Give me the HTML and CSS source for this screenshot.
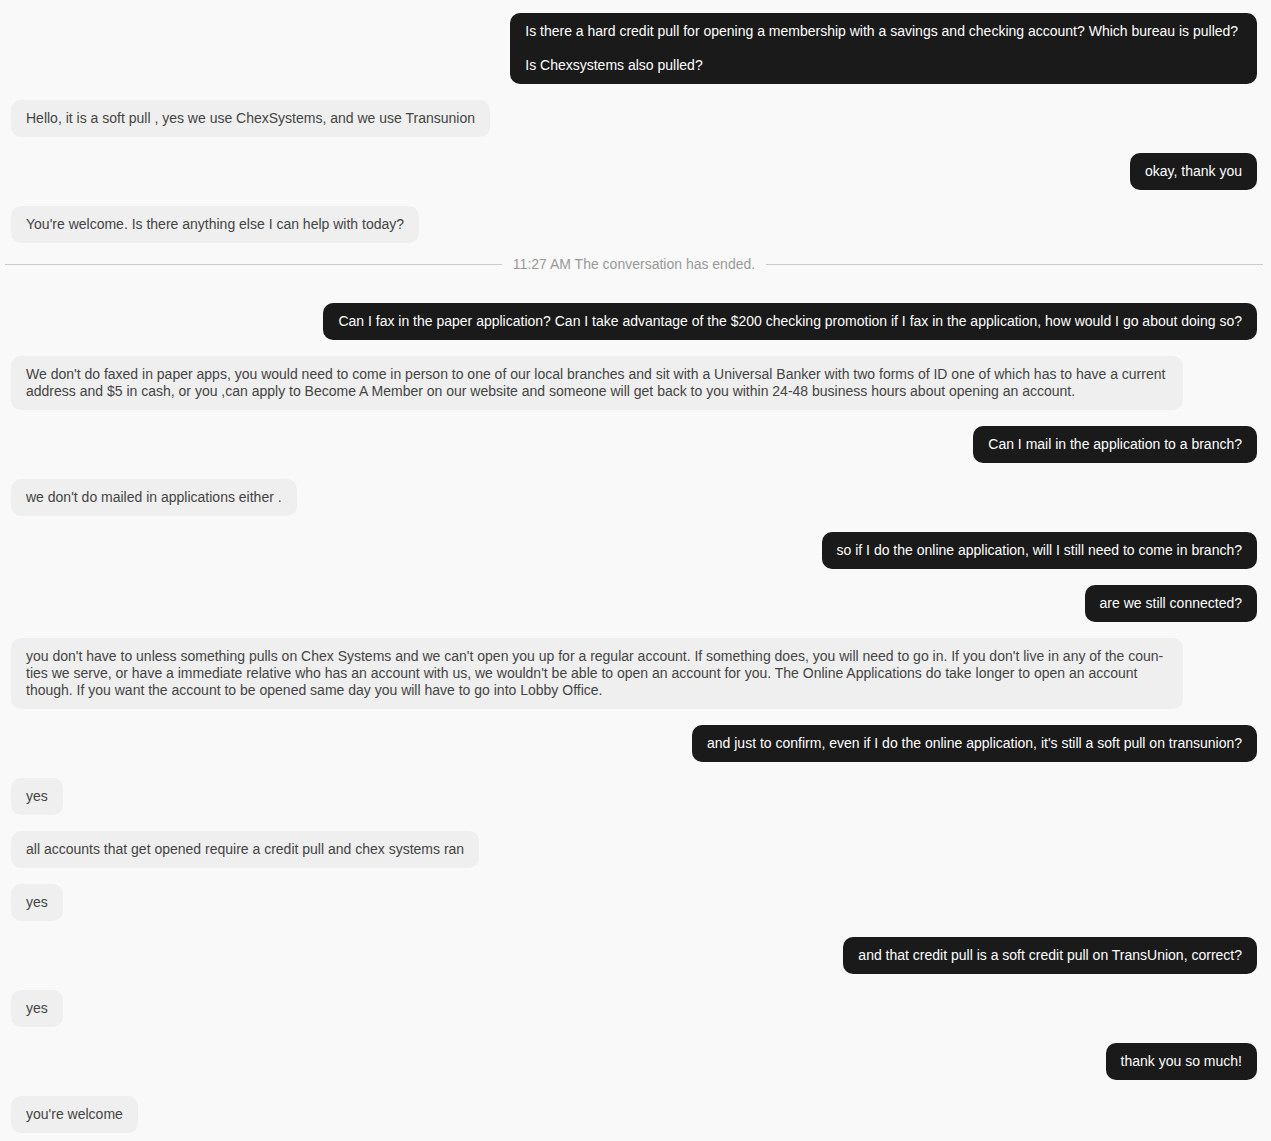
FILE: index.html
```html
<!DOCTYPE html>
<html>
<head>
<meta charset="utf-8">
<link rel="stylesheet" href="styles.css">
</head>
<body>
<div class="chat">
  <div class="msg user pre">Is there a hard credit pull for opening a membership with a savings and checking account? Which bureau is pulled? 

Is Chexsystems also pulled?</div>
  <div class="msg agent">Hello, it is a soft pull , yes we use ChexSystems, and we use Transunion</div>
  <div class="msg user">okay, thank you</div>
  <div class="msg agent">You're welcome. Is there anything else I can help with today?</div>
  <div class="sep"><span class="sep-text">11:27 AM The conversation has ended.</span></div>
  <div class="msg user">Can I fax in the paper application? Can I take advantage of the $200 checking promotion if I fax in the application, how would I go about doing so?</div>
  <div class="msg agent">We don't do faxed in paper apps, you would need to come in person to one of our local branches and sit with a Universal Banker with two forms of ID one of which has to have a current address and $5 in cash, or you ,can apply to Become A Member on our website and someone will get back to you within 24-48 business hours about opening an account.</div>
  <div class="msg user">Can I mail in the application to a branch?</div>
  <div class="msg agent">we don't do mailed in applications either .</div>
  <div class="msg user">so if I do the online application, will I still need to come in branch?</div>
  <div class="msg user">are we still connected?</div>
  <div class="msg agent">you don't have to unless something pulls on Chex Systems and we can't open you up for a regular account. If something does, you will need to go in. If you don't live in any of the coun&shy;ties we serve, or have a immediate relative who has an account with us, we wouldn't be able to open an account for you. The Online Applications do take longer to open an account though. If you want the account to be opened same day you will have to go into Lobby Office.</div>
  <div class="msg user">and just to confirm, even if I do the online application, it's still a soft pull on transunion?</div>
  <div class="msg agent">yes</div>
  <div class="msg agent">all accounts that get opened require a credit pull and chex systems ran</div>
  <div class="msg agent">yes</div>
  <div class="msg user">and that credit pull is a soft credit pull on TransUnion, correct?</div>
  <div class="msg agent">yes</div>
  <div class="msg user">thank you so much!</div>
  <div class="msg agent">you're welcome</div>
</div>
</body>
</html>
```
FILE: styles.css
```css
html, body {
  margin: 0;
  padding: 0;
  background: #f9f9f9;
}
body {
  font-family: "Liberation Sans", Arial, sans-serif;
  font-size: 14px;
  line-height: 17px;
}
.chat {
  display: flex;
  flex-direction: column;
  gap: 16px;
  padding: 13px 8px 8px 5px;
}
.msg {
  max-width: 1142px;
  padding: 10px 15px;
  border-radius: 10px;
  margin: 0 6px;
  overflow-wrap: break-word;
}
.pre {
  white-space: pre-wrap;
}
.user {
  align-self: flex-end;
  background: #1a1a1a;
  color: #ffffff;
}
.agent {
  align-self: flex-start;
  background: #efefef;
  color: #444444;
}
.sep {
  display: flex;
  align-items: center;
  gap: 11px;
  color: #999999;
  margin: -3px 0 14px 0;
}
.sep::before, .sep::after {
  content: "";
  flex: 1;
  height: 1px;
  background: #cccccc;
}
```
